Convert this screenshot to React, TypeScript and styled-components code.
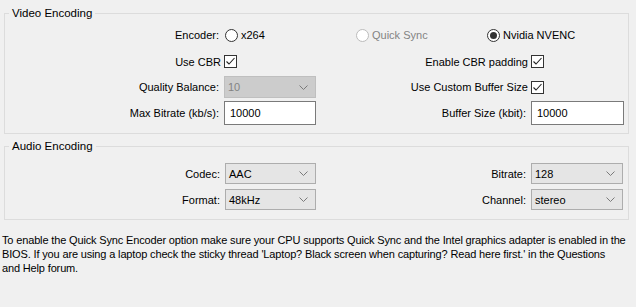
import styled, { createGlobalStyle } from "styled-components";

const GlobalStyle = createGlobalStyle`
  html, body {
    margin: 0;
    padding: 0;
    background: #f0f0f0;
  }
  body {
    font-family: "Liberation Sans", Arial, sans-serif;
    font-size: 11px;
    color: #000;
  }
`;

function Chevron() {
  return (
    <svg width="9" height="5" viewBox="0 0 9 5">
      <polyline points="0.5,0.5 4.5,4.5 8.5,0.5" fill="none" stroke="#7a7a7a" strokeWidth="1" />
    </svg>
  );
}

function Radio({ checked, disabled, label }: { checked?: boolean; disabled?: boolean; label: string }) {
  return (
    <RadioItem $disabled={disabled}>
      <RadioCircle $disabled={disabled}>{checked ? <RadioDot /> : null}</RadioCircle>
      {label}
    </RadioItem>
  );
}

function Check() {
  return (
    <CheckBox>
      <svg width="11" height="11" viewBox="0 0 11 11">
        <polyline points="1.5,5.5 4,8 9.5,2" fill="none" stroke="#222" strokeWidth="1.1" />
      </svg>
    </CheckBox>
  );
}

function Combo({ value, disabled }: { value: string; disabled?: boolean }) {
  return (
    <ComboBox $disabled={disabled}>
      <span>{value}</span>
      <Chevron />
    </ComboBox>
  );
}

export default function App() {
  return (
    <Page>
      <GlobalStyle />
      <Group>
        <Legend>Video Encoding</Legend>
        <VideoGrid>
          <Label>Encoder:</Label>
          <RadioRow>
            <Radio label="x264" />
            <Radio label="Quick Sync" disabled />
            <Radio label="Nvidia NVENC" checked />
          </RadioRow>

          <CheckLabel>Use CBR</CheckLabel>
          <Check />
          <CheckLabel>Enable CBR padding</CheckLabel>
          <Check />

          <Label>Quality Balance:</Label>
          <Combo value="10" disabled />
          <CheckLabel>Use Custom Buffer Size</CheckLabel>
          <Check />

          <Label>Max Bitrate (kb/s):</Label>
          <TextBox>10000</TextBox>
          <Label>Buffer Size (kbit):</Label>
          <TextBox>10000</TextBox>
        </VideoGrid>
      </Group>

      <Group $audio>
        <Legend>Audio Encoding</Legend>
        <AudioGrid>
          <Label>Codec:</Label>
          <Combo value="AAC" />
          <Label>Bitrate:</Label>
          <Combo value="128" />

          <Label>Format:</Label>
          <Combo value="48kHz" />
          <Label>Channel:</Label>
          <Combo value="stereo" />
        </AudioGrid>
      </Group>

      <Note>
        To enable the Quick Sync Encoder option make sure your CPU supports Quick Sync and the Intel graphics adapter is enabled in the
        <br />
        BIOS. If you are using a laptop check the sticky thread 'Laptop? Black screen when capturing? Read here first.' in the Questions
        <br />
        and Help forum.
      </Note>
    </Page>
  );
}

const Page = styled.div`
  width: 636px;
  height: 307px;
  padding: 6px 7px 0 4px;
  box-sizing: border-box;
  display: flex;
  flex-direction: column;
`;

const Group = styled.fieldset<{ $audio?: boolean }>`
  margin: ${(p) => (p.$audio ? "5px 0 0" : "0")};
  padding: 0;
  border: 1px solid #dcdcdc;
  min-width: 0;
`;

const Legend = styled.legend`
  margin-left: 4px;
  padding: 0 3px 0 3px;
  font-size: 11.5px;
  line-height: 14px;
`;

const VideoGrid = styled.div`
  display: grid;
  grid-template-columns: 214px 92px 205px 93px;
  grid-template-rows: 24px 23px 22px 24px;
  column-gap: 5px;
  row-gap: 3px;
  align-items: center;
  padding: 3px 0 8px 0;
`;

const AudioGrid = styled.div`
  display: grid;
  grid-template-columns: 215px 91px 205px 92px;
  grid-template-rows: 21px 21px;
  column-gap: 5px;
  row-gap: 5px;
  align-items: center;
  padding: 10px 0 9px 0;
`;

const Label = styled.div`
  text-align: right;
  white-space: nowrap;
`;

const CheckLabel = styled(Label)`
  margin-right: -2px;
`;

const RadioRow = styled.div`
  grid-column: 2 / span 3;
  display: flex;
  align-items: center;
  padding-left: 1px;
`;

const RadioItem = styled.div<{ $disabled?: boolean }>`
  display: flex;
  align-items: center;
  gap: 3px;
  width: 131px;
  color: ${(p) => (p.$disabled ? "#838383" : "#000")};
`;

const RadioCircle = styled.span<{ $disabled?: boolean }>`
  width: 11px;
  height: 11px;
  border-radius: 50%;
  border: 1px solid ${(p) => (p.$disabled ? "#bcbcbc" : "#333")};
  background: #fff;
  display: flex;
  align-items: center;
  justify-content: center;
`;

const RadioDot = styled.span`
  width: 7px;
  height: 7px;
  border-radius: 50%;
  background: #333;
`;

const CheckBox = styled.span`
  justify-self: start;
  width: 11px;
  height: 11px;
  border: 1px solid #333;
  background: #fff;
  display: flex;
  align-items: center;
  justify-content: center;
`;

const ComboBox = styled.div<{ $disabled?: boolean }>`
  height: 100%;
  box-sizing: border-box;
  border: 1px solid ${(p) => (p.$disabled ? "#bfbfbf" : "#adadad")};
  background: ${(p) => (p.$disabled ? "#cccccc" : "#e5e5e5")};
  color: ${(p) => (p.$disabled ? "#838383" : "#000")};
  display: flex;
  align-items: center;
  justify-content: space-between;
  padding: 0 7px 0 3px;
`;

const TextBox = styled.div`
  height: 100%;
  box-sizing: border-box;
  border: 1px solid #7a7a7a;
  background: #fff;
  display: flex;
  align-items: center;
  padding-left: 5px;
`;

const Note = styled.p`
  margin: 13px 0 0 -2px;
  font-size: 11px;
  line-height: 14px;
  letter-spacing: -0.15px;
  white-space: nowrap;
`;
